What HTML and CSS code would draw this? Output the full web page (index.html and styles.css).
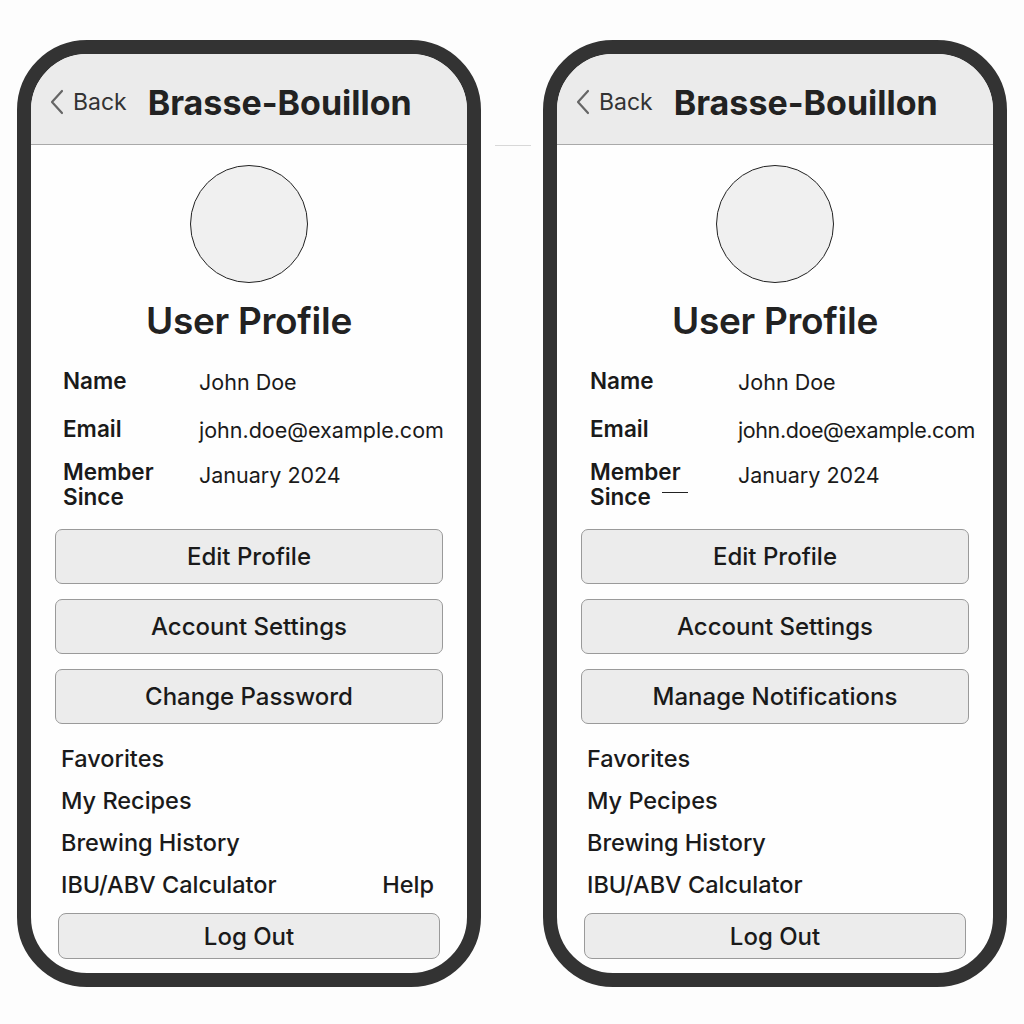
FILE: index.html
```html
<!DOCTYPE html>
<html lang="en">
<head>
  <meta charset="UTF-8">
  <meta name="viewport" content="width=device-width, initial-scale=1.0">
  <title>Brasse-Bouillon - User Profile</title>
  <link rel="stylesheet" href="styles.css">
</head>
<body>

  <div class="board">

    <!-- Phone 1 -->
    <div class="phone">
      <div class="topbar">
        <a class="back" href="#">
          <svg width="16" height="26" viewBox="0 0 16 26"><path d="M13 2 L3 13 L13 24" fill="none" stroke="#666" stroke-width="2.2" stroke-linecap="round" stroke-linejoin="round"/></svg>
          <span>Back</span>
        </a>
        <div class="app-name">Brasse-Bouillon</div>
      </div>

      <div class="avatar"></div>
      <h1 class="title">User Profile</h1>

      <div class="info">
        <div class="label">Name</div>
        <div class="value">John Doe</div>
        <div class="label">Email</div>
        <div class="value">john.doe@example.com</div>
        <div class="label member">Member<br>Since</div>
        <div class="value member">January 2024</div>
      </div>

      <div class="actions">
        <button class="btn">Edit Profile</button>
        <button class="btn">Account Settings</button>
        <button class="btn">Change Password</button>
      </div>

      <div class="links">
        <div class="link">Favorites</div>
        <div class="link">My Recipes</div>
        <div class="link">Brewing History</div>
        <div class="link-row">
          <div class="link">IBU/ABV Calculator</div>
          <div class="link">Help</div>
        </div>
      </div>

      <button class="logout">Log Out</button>
    </div>

    <!-- Gutter between phones -->
    <div class="gutter"><div class="gutter-line"></div></div>

    <!-- Phone 2 -->
    <div class="phone">
      <div class="topbar">
        <a class="back" href="#">
          <svg width="16" height="26" viewBox="0 0 16 26"><path d="M13 2 L3 13 L13 24" fill="none" stroke="#666" stroke-width="2.2" stroke-linecap="round" stroke-linejoin="round"/></svg>
          <span>Back</span>
        </a>
        <div class="app-name">Brasse-Bouillon</div>
      </div>

      <div class="avatar"></div>
      <h1 class="title">User Profile</h1>

      <div class="info info-wide">
        <div class="label">Name</div>
        <div class="value">John Doe</div>
        <div class="label">Email</div>
        <div class="value email">john.doe@example.com</div>
        <div class="label member">Member<br>Since <span class="dash"></span></div>
        <div class="value member">January 2024</div>
      </div>

      <div class="actions">
        <button class="btn">Edit Profile</button>
        <button class="btn">Account Settings</button>
        <button class="btn">Manage Notifications</button>
      </div>

      <div class="links">
        <div class="link">Favorites</div>
        <div class="link">My Pecipes</div>
        <div class="link">Brewing History</div>
        <div class="link">IBU/ABV Calculator</div>
      </div>

      <button class="logout">Log Out</button>
    </div>

  </div>

</body>
</html>
```

FILE: styles.css
```css
body {
  margin: 0;
  padding: 0;
  background-color: #fdfdfd;
  color: #1a1a1a;
  font-family: Inter, "Noto Sans", Arial, sans-serif;
}

.board {
  display: flex;
  padding: 40px 0 0 17px;
}

.phone {
  width: 464px;
  height: 947px;
  box-sizing: border-box;
  border: 14px solid #333;
  border-radius: 70px;
  background-color: #fefefe;
  overflow: hidden;
  display: flex;
  flex-direction: column;
}

.gutter {
  width: 62px;
}

.gutter-line {
  margin: 105px 0 0 14px;
  width: 36px;
  height: 1px;
  background-color: #d8d8d8;
}

/* Header bar */
.topbar {
  height: 91px;
  flex-shrink: 0;
  box-sizing: border-box;
  padding: 6px 0 0 18px;
  background-color: #ebebeb;
  border-bottom: 1px solid #a9a9a9;
  display: flex;
  align-items: center;
}

.back {
  display: flex;
  align-items: center;
  gap: 8px;
  margin-right: 21px;
  color: #333;
  text-decoration: none;
  font-size: 23px;
}

.app-name {
  font-size: 34px;
  font-weight: 700;
  color: #222;
}

/* Profile */
.avatar {
  width: 116px;
  height: 116px;
  border-radius: 50%;
  border: 1.5px solid #222;
  background-color: #f0f0f0;
  margin: 20px auto 0;
  flex-shrink: 0;
}

.title {
  margin: 16px 0 0;
  text-align: center;
  font-size: 37px;
  font-weight: 600;
  letter-spacing: -0.3px;
  line-height: 44px;
  color: #222;
}

.info {
  display: grid;
  grid-template-columns: 136px 1fr;
  row-gap: 21px;
  margin: 25px 0 0 32px;
  font-size: 21.5px;
  line-height: 25px;
}

.info-wide {
  grid-template-columns: 148px 1fr;
  margin-left: 33px;
}

.label {
  font-size: 22.5px;
  font-weight: 600;
}

.value {
  padding-top: 2px;
}

.member {
  margin-top: -5px;
}

.value.member {
  padding-top: 4px;
}

.email {
  letter-spacing: -0.4px;
}

.dash {
  display: inline-block;
  width: 26px;
  height: 1px;
  background-color: #222;
  vertical-align: 12px;
  margin-left: 6px;
}

/* Buttons */
.actions {
  display: flex;
  flex-direction: column;
  gap: 15px;
  margin: 20px 24px 0;
}

.btn {
  height: 55px;
  border: 1px solid #9a9a9a;
  border-radius: 7px;
  background-color: #ececec;
  font-family: inherit;
  font-size: 24px;
  font-weight: 500;
  color: #1a1a1a;
}

.links {
  margin: 14px 33px 0 30px;
  font-size: 23.5px;
  font-weight: 500;
  line-height: 42px;
}

.link-row {
  display: flex;
  justify-content: space-between;
}

.logout {
  margin: 7px 27px 0;
  height: 46px;
  flex-shrink: 0;
  border: 1px solid #9a9a9a;
  border-radius: 8px;
  background-color: #ececec;
  font-family: inherit;
  font-size: 24px;
  font-weight: 500;
  color: #1a1a1a;
}
```
